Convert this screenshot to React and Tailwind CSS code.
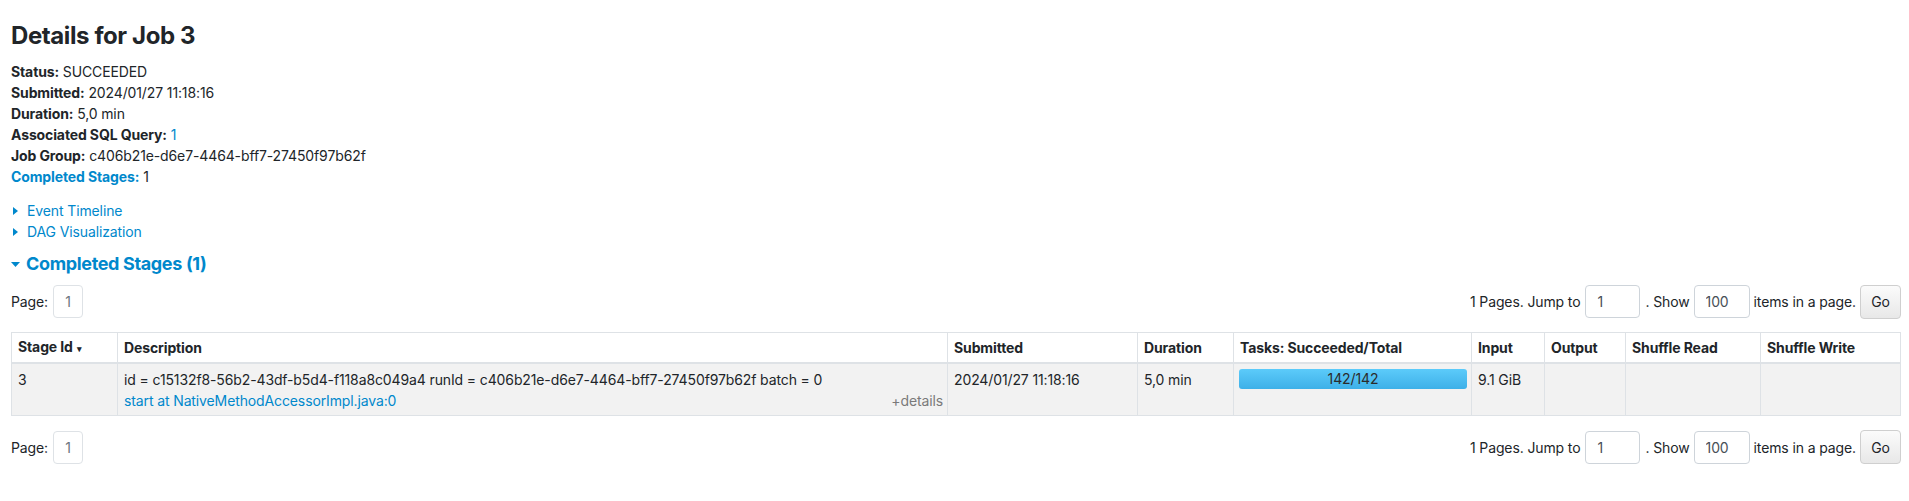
import React from "react";

const FONT = { fontFamily: "Inter, 'Liberation Sans', Arial, sans-serif" };

const COLUMNS = [
  { label: "Stage Id", width: "w-[106px]", sort: true },
  { label: "Description", width: "w-[830px]" },
  { label: "Submitted", width: "w-[190px]" },
  { label: "Duration", width: "w-[96px]" },
  { label: "Tasks: Succeeded/Total", width: "w-[238px]" },
  { label: "Input", width: "w-[73px]" },
  { label: "Output", width: "w-[81px]" },
  { label: "Shuffle Read", width: "w-[135px]" },
  { label: "Shuffle Write", width: "w-[140px]" },
];

const SUMMARY = [
  { label: "Status:", value: "SUCCEEDED" },
  { label: "Submitted:", value: "2024/01/27 11:18:16" },
  { label: "Duration:", value: "5,0 min" },
  { label: "Associated SQL Query:", value: "1", link: true },
  { label: "Job Group:", value: "c406b21e-d6e7-4464-bff7-27450f97b62f" },
  { label: "Completed Stages:", value: "1", labelLink: true },
];

const CaretRight = () => (
  <svg width="5" height="8" viewBox="0 0 5 8" className="shrink-0">
    <path d="M0 0 L5 4 L0 8 Z" fill="#0088cc" />
  </svg>
);

const CaretDown = () => (
  <svg width="9" height="5" viewBox="0 0 9 5" className="shrink-0">
    <path d="M0 0 L9 0 L4.5 5 Z" fill="#0088cc" />
  </svg>
);

const Pagination = () => (
  <div className="flex items-center justify-between h-[33px]">
    <div className="flex items-center">
      <span className="mr-[5px]">Page:</span>
      <span className="flex items-center justify-center w-[30px] h-[33px] border border-[#dee2e6] rounded-[4px] text-[#6c757d]">
        1
      </span>
    </div>
    <div className="flex items-center">
      <span>1 Pages. Jump to</span>
      <input
        readOnly
        value="1"
        className="ml-[5px] w-[55px] h-[33px] border border-[#ced4da] rounded-[4px] pl-[11px] text-[#495057] outline-none"
        style={FONT}
      />
      <span className="ml-[5px]">. Show</span>
      <input
        readOnly
        value="100"
        className="ml-[4px] w-[56px] h-[33px] border border-[#ced4da] rounded-[4px] pl-[11px] text-[#495057] outline-none"
        style={FONT}
      />
      <span className="ml-[4px]">items in a page.</span>
      <button className="ml-[4px] w-[41px] h-[34px] border border-[#cfcfcf] rounded-[4px] bg-gradient-to-b from-[#fbfbfb] to-[#e8e8e8] text-[#212529]">
        Go
      </button>
    </div>
  </div>
);

export default function App() {
  return (
    <div
      className="bg-white text-[#212529] text-[14px] leading-[21px] tracking-[-0.12px] pl-[11px] pr-[8px] min-h-[501px]"
      style={FONT}
    >
      <h3 className="pt-[21px] text-[24px] leading-[30px] font-bold tracking-[-0.4px] text-[#212529]">
        Details for Job 3
      </h3>

      <ul className="mt-[10px]">
        {SUMMARY.map((item) => (
          <li key={item.label}>
            <strong className={item.labelLink ? "text-[#0088cc]" : ""}>
              {item.label}
            </strong>{" "}
            <span className={item.link ? "text-[#0088cc]" : ""}>{item.value}</span>
          </li>
        ))}
      </ul>

      <div className="mt-[13px] text-[#0088cc]">
        <div className="flex items-center gap-[9px] pl-[2px]">
          <CaretRight />
          <span>Event Timeline</span>
        </div>
        <div className="flex items-center gap-[9px] pl-[2px]">
          <CaretRight />
          <span>DAG Visualization</span>
        </div>
      </div>

      <h4 className="mt-[10px] flex items-center gap-[6px] text-[18px] leading-[24px] font-bold tracking-[-0.35px] text-[#0088cc]">
        <CaretDown />
        <span>Completed Stages (1)</span>
      </h4>

      <div className="mt-[9px]">
        <Pagination />
      </div>

      <table className="mt-[14px] table-fixed border-collapse w-[1889px]">
        <thead>
          <tr>
            {COLUMNS.map((col) => (
              <th
                key={col.label}
                className={`${col.width} text-left font-bold px-[6px] py-[3px] border border-[#dee2e6] border-b-2`}
              >
                {col.label}
                {col.sort && <span className="ml-[4px] text-[9px] align-middle">▾</span>}
              </th>
            ))}
          </tr>
        </thead>
        <tbody>
          <tr className="bg-[#f2f2f2] align-top">
            <td className="px-[6px] pt-[5px] pb-[4px] border border-[#dee2e6]">3</td>
            <td className="px-[6px] pt-[5px] pb-[4px] border border-[#dee2e6]">
              <div>
                id = c15132f8-56b2-43df-b5d4-f118a8c049a4 runId = c406b21e-d6e7-4464-bff7-27450f97b62f batch = 0
              </div>
              <div className="flex justify-between">
                <span className="text-[#0088cc]">start at NativeMethodAccessorImpl.java:0</span>
                <span className="text-[#7a7a7a] -mr-[2px]">+details</span>
              </div>
            </td>
            <td className="px-[6px] pt-[5px] pb-[4px] border border-[#dee2e6]">2024/01/27 11:18:16</td>
            <td className="px-[6px] pt-[5px] pb-[4px] border border-[#dee2e6]">5,0 min</td>
            <td className="pl-[5px] pr-[4px] pt-[5px] pb-[4px] border border-[#dee2e6]">
              <div className="h-[20px] rounded-[3px] bg-gradient-to-b from-[#5ccbfa] to-[#3db0e8] flex items-center justify-center text-[#2b2b2b] leading-[20px]">
                142/142
              </div>
            </td>
            <td className="px-[6px] pt-[5px] pb-[4px] border border-[#dee2e6]">9.1 GiB</td>
            <td className="px-[6px] pt-[5px] pb-[4px] border border-[#dee2e6]"></td>
            <td className="px-[6px] pt-[5px] pb-[4px] border border-[#dee2e6]"></td>
            <td className="px-[6px] pt-[5px] pb-[4px] border border-[#dee2e6]"></td>
          </tr>
        </tbody>
      </table>

      <div className="mt-[15px]">
        <Pagination />
      </div>
    </div>
  );
}
